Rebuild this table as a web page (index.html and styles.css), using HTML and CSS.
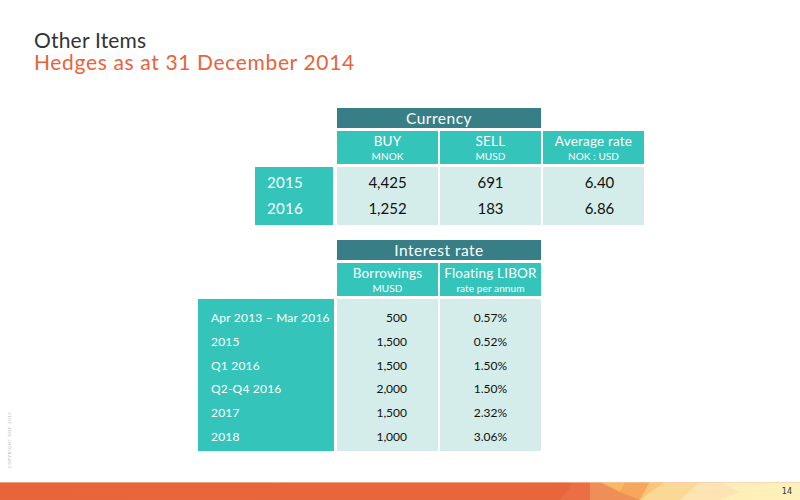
FILE: index.html
```html
<!DOCTYPE html>
<html lang="en">
<head>
<meta charset="utf-8">
<title>Other Items – Hedges</title>
<link rel="stylesheet" href="styles.css">
</head>
<body>
<div class="slide">
  <header class="titles">
    <h1 class="title">Other Items</h1>
    <h2 class="subtitle">Hedges as at 31 December 2014</h2>
  </header>

  <main class="content">
    <section class="tbl tbl-currency">
      <div class="group">Currency</div>
      <div class="colhead col-2">BUY<span class="unit">MNOK</span></div>
      <div class="colhead col-3">SELL<span class="unit">MUSD</span></div>
      <div class="colhead col-4">Average rate<span class="unit">NOK : USD</span></div>
      <div class="labels"><div>2015</div><div>2016</div></div>
      <div class="cells"><div>4,425</div><div>1,252</div></div>
      <div class="cells"><div>691</div><div>183</div></div>
      <div class="cells rate"><div>6.40</div><div>6.86</div></div>
    </section>

    <section class="tbl tbl-interest">
      <div class="group">Interest rate</div>
      <div class="colhead col-2">Borrowings<span class="unit">MUSD</span></div>
      <div class="colhead col-3">Floating LIBOR<span class="unit">rate per annum</span></div>
      <div class="labels">
        <div>Apr 2013 – Mar 2016</div>
        <div>2015</div>
        <div>Q1 2016</div>
        <div>Q2-Q4 2016</div>
        <div>2017</div>
        <div>2018</div>
      </div>
      <div class="cells amounts">
        <div>500</div><div>1,500</div><div>1,500</div><div>2,000</div><div>1,500</div><div>1,000</div>
      </div>
      <div class="cells">
        <div>0.57%</div><div>0.52%</div><div>1.50%</div><div>1.50%</div><div>2.32%</div><div>3.06%</div>
      </div>
    </section>
  </main>

  <div class="side-note">COPYRIGHT DOF 2015</div>

  <footer class="footer">
    <svg class="footer-art" width="800" height="18" viewBox="0 0 800 18" aria-hidden="true">
      <defs>
        <linearGradient id="fg" x1="0" x2="1" y1="0" y2="0">
          <stop offset="0" stop-color="#e8653c"/>
          <stop offset="0.71" stop-color="#e8663c"/>
          <stop offset="0.77" stop-color="#f2a35c"/>
          <stop offset="0.84" stop-color="#fbdc98"/>
          <stop offset="0.90" stop-color="#fdeeb6"/>
          <stop offset="1" stop-color="#fef1b9"/>
        </linearGradient>
      </defs>
      <rect width="800" height="18" fill="url(#fg)"/>
      <polygon points="575,0 600,0 590,18 560,18" fill="#ea6f44"/>
      <polygon points="590,0 625,0 640,18 590,18" fill="#ef8e56"/>
      <polygon points="600,0 630,0 620,10" fill="#f8b864"/>
      <polygon points="625,0 650,0 640,18 620,10" fill="#f6a65d"/>
      <polygon points="650,0 665,0 640,18" fill="#fbc774"/>
      <polygon points="665,0 700,0 680,18 640,18" fill="#fcd897"/>
      <polygon points="700,0 720,0 740,10 720,18 680,18" fill="#fde4b2"/>
      <rect width="800" height="1" fill="#f7c9b2" opacity="0.6"/>
    </svg>
    <span class="page-no">14</span>
  </footer>
</div>
</body>
</html>
```

FILE: styles.css
```css
* { box-sizing: border-box; }

html, body {
  margin: 0;
  padding: 0;
  background: #ffffff;
}

body {
  font-family: Lato, "Open Sans", "Liberation Sans", sans-serif;
  color: #1a1a1a;
}

.slide {
  position: relative;
  width: 800px;
  height: 500px;
  display: flex;
  flex-direction: column;
  overflow: hidden;
}

/* ---------- titles ---------- */
.titles {
  padding: 29px 0 0 34px;
}

.title,
.subtitle {
  margin: 0;
  font-weight: 400;
  font-size: 21px;
  line-height: 22px;
}

.title { color: #333333; letter-spacing: 0.2px; }
.subtitle { color: #e8633c; letter-spacing: 0.65px; }

/* ---------- tables ---------- */
.content {
  flex: 1;
  display: flex;
  flex-direction: column;
  padding-left: 198px;
  padding-top: 35px;
}

.tbl {
  display: grid;
  column-gap: 2px;
  row-gap: 3px;
}

.tbl-currency {
  margin-left: 57px;
  grid-template-columns: 80px 101px 101px 101px;
  grid-template-rows: 20px 33px auto;
}

.tbl-interest {
  margin-top: 15px;
  grid-template-columns: 137px 101px 101px;
  grid-template-rows: 20px 33px auto;
}

.group {
  grid-column: 2 / 4;
  grid-row: 1;
  background: #377e86;
  color: #ffffff;
  font-size: 15.5px;
  letter-spacing: 0.5px;
  line-height: 20px;
  text-align: center;
}

.colhead {
  grid-row: 2;
  background: #35c4b9;
  color: #ffffff;
  font-size: 13.5px;
  letter-spacing: 0.2px;
  line-height: 15px;
  text-align: center;
  padding-top: 3px;
  display: flex;
  flex-direction: column;
  align-items: center;
}

.col-2 { grid-column: 2; }
.col-3 { grid-column: 3; }
.col-4 { grid-column: 4; }

.unit {
  font-size: 10px;
  letter-spacing: 0.1px;
  line-height: 14px;
}

.labels {
  grid-row: 3;
  grid-column: 1;
  margin-right: 2px;
  background: #35c4b9;
  color: #ffffff;
}

.cells {
  grid-row: 3;
  background: #d4edea;
  color: #111111;
  text-align: center;
}

.tbl-currency .labels,
.tbl-currency .cells {
  padding: 2px 0 4px;
  font-size: 15px;
  line-height: 26px;
}

.tbl-currency .labels { padding-left: 12px; letter-spacing: 0.3px; }
.tbl-currency .rate { padding-left: 12px; }

.tbl-interest .labels,
.tbl-interest .cells {
  padding: 7px 0 2px;
  font-size: 12px;
  line-height: 23.8px;
}

.tbl-interest .labels { padding-left: 13px; margin-right: 1px; letter-spacing: 0.2px; }

.tbl-interest .amounts {
  text-align: right;
  padding-right: 31px;
}

/* ---------- side note & footer ---------- */
.side-note {
  position: absolute;
  left: 7px;
  top: 468px;
  transform: rotate(-90deg);
  transform-origin: 0 0;
  font-size: 4px;
  letter-spacing: 0.8px;
  color: #b5b5b5;
  white-space: nowrap;
}

.footer {
  position: relative;
  height: 18px;
  flex: none;
}

.footer-art {
  display: block;
}

.page-no {
  position: absolute;
  right: 8px;
  top: 5px;
  font-family: "DejaVu Sans", sans-serif;
  font-size: 8px;
  color: #333333;
}
```
